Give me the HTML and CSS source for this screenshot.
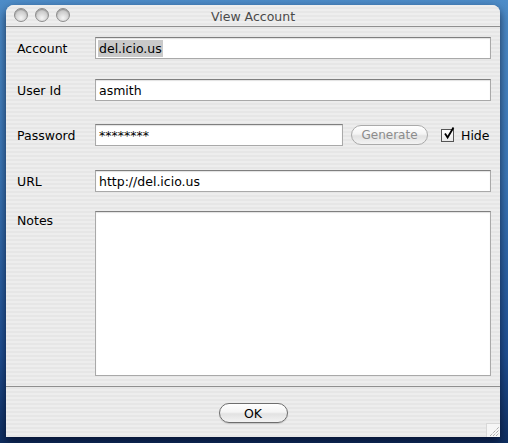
FILE: index.html
```html
<!DOCTYPE html>
<html>
<head>
<meta charset="utf-8">
<link rel="stylesheet" href="styles.css">
</head>
<body>
<div class="window">
  <div class="titlebar">
    <div class="lights">
      <span class="light"></span><span class="light"></span><span class="light"></span>
    </div>
    <div class="title">View Account</div>
  </div>
  <div class="content">
    <div class="row row-account">
      <label class="label">Account</label>
      <div class="field"><span class="sel">del.icio.us</span></div>
    </div>
    <div class="row row-user">
      <label class="label">User Id</label>
      <div class="field">asmith</div>
    </div>
    <div class="row row-pass">
      <label class="label">Password</label>
      <div class="field field-pass">********</div>
      <div class="btn btn-gen">Generate</div>
      <div class="check">
        <span class="box"><svg width="13" height="13" viewBox="0 0 13 13"><path d="M3 6.5 L5.6 10.5 L11.5 0.5" fill="none" stroke="#000" stroke-width="1.8"/></svg></span>
        <span class="check-label">Hide</span>
      </div>
    </div>
    <div class="row row-url">
      <label class="label">URL</label>
      <div class="field">http://del.icio.us</div>
    </div>
    <div class="row row-notes">
      <label class="label label-top">Notes</label>
      <div class="field area"></div>
    </div>
  </div>
  <div class="footer">
    <div class="btn btn-ok">OK</div>
    <div class="grip"><svg width="13" height="13" viewBox="0 0 13 13"><path d="M3 12 L12 3 M6 12 L12 6 M9 12 L12 9" stroke="#8a8a8a" stroke-width="1" stroke-dasharray="1 1"/></svg></div>
  </div>
</div>
</body>
</html>
```
FILE: styles.css
```css
html, body {
  margin: 0;
  padding: 0;
}
body {
  width: 508px;
  height: 443px;
  overflow: hidden;
  background: linear-gradient(180deg, #4d8cc8 0%, #3a76b6 40%, #1f4f92 80%, #0f2e60 100%);
  font-family: "DejaVu Sans", "Liberation Sans", sans-serif;
  font-size: 12.5px;
  color: #000;
}
.window {
  margin: 5px 0 0 6px;
  width: 494px;
  height: 432px;
  border-radius: 8px 8px 0 0;
  background: repeating-linear-gradient(180deg, #ededed 0px, #ededed 2px, #e6e6e6 2px, #e6e6e6 4px);
  box-shadow: 0 4px 10px rgba(0, 0, 20, 0.65);
  display: flex;
  flex-direction: column;
  overflow: hidden;
}
.titlebar {
  height: 21px;
  border-bottom: 1px solid #8f8f8f;
  position: relative;
  display: flex;
  align-items: center;
  justify-content: center;
  background: repeating-linear-gradient(180deg, #eeeeee 0px, #eeeeee 2px, #e7e7e7 2px, #e7e7e7 4px);
}
.lights {
  position: absolute;
  left: 8px;
  top: 3px;
  display: flex;
  gap: 7px;
}
.light {
  width: 14px;
  height: 14px;
  border-radius: 50%;
  box-sizing: border-box;
  border: 1px solid #8c8c8c;
  background: radial-gradient(circle at 50% 75%, #f4f4f4 0%, #d6d6d6 45%, #b4b4b4 100%);
  box-shadow: inset 0 1px 1px rgba(0,0,0,0.25);
}
.title {
  font-size: 12.5px;
  color: #4a4a4a;
  margin-top: 1px;
}
.content {
  flex: 1;
  padding: 10px 9px 0 11px;
  border-bottom: 1px solid #8f8f8f;
  display: flex;
  flex-direction: column;
}
.row {
  display: flex;
  align-items: center;
}
.row-user { margin-top: 20px; }
.row-pass { margin-top: 23px; }
.row-url { margin-top: 24px; }
.row-notes { margin-top: 19px; align-items: flex-start; }
.label {
  width: 78px;
  flex: none;
}
.label-top { margin-top: 2px; }
.field {
  flex: 1;
  height: 22px;
  box-sizing: border-box;
  background: #fff;
  border: 1px solid #a9a9a9;
  border-top-color: #7f7f7f;
  box-shadow: inset 0 1px 1px rgba(0,0,0,0.12);
  padding: 0 3px;
  display: flex;
  align-items: center;
  white-space: nowrap;
}
.sel {
  background: #c9c9c9;
  padding: 1px 1px;
  margin-left: -1px;
}
.field-pass {
  flex: none;
  width: 248px;
}
.area {
  height: 165px;
}
.btn {
  box-sizing: border-box;
  height: 20px;
  border-radius: 10px;
  display: flex;
  align-items: center;
  justify-content: center;
  background: linear-gradient(180deg, #ffffff 0%, #f4f4f4 45%, #e2e2e2 55%, #f3f3f3 100%);
}
.btn-gen {
  width: 77px;
  margin-left: 8px;
  border: 1px solid #aaaaaa;
  color: #8c8c8c;
  font-size: 12px;
}
.check {
  display: flex;
  align-items: center;
  margin-left: 13px;
}
.box {
  width: 13px;
  height: 13px;
  box-sizing: border-box;
  border: 1px solid #555;
  background: linear-gradient(180deg, #ffffff, #e9e9e9);
  position: relative;
  display: block;
}
.box svg {
  position: absolute;
  left: 0;
  top: -3px;
}
.check-label {
  margin-left: 7px;
  font-size: 12.5px;
}
.footer {
  height: 50px;
  position: relative;
  display: flex;
  justify-content: center;
  padding-top: 16px;
  box-sizing: border-box;
}
.btn-ok {
  width: 69px;
  border: 1px solid #6e6e6e;
  font-size: 12.5px;
  box-shadow: 0 1px 1px rgba(0,0,0,0.15);
}
.grip {
  position: absolute;
  right: 0;
  bottom: 0;
  width: 13px;
  height: 13px;
  background: #f6f6f6;
  border-left: 1px solid #d8d8d8;
  border-top: 1px solid #d8d8d8;
}
.grip svg { display: block; }
```
